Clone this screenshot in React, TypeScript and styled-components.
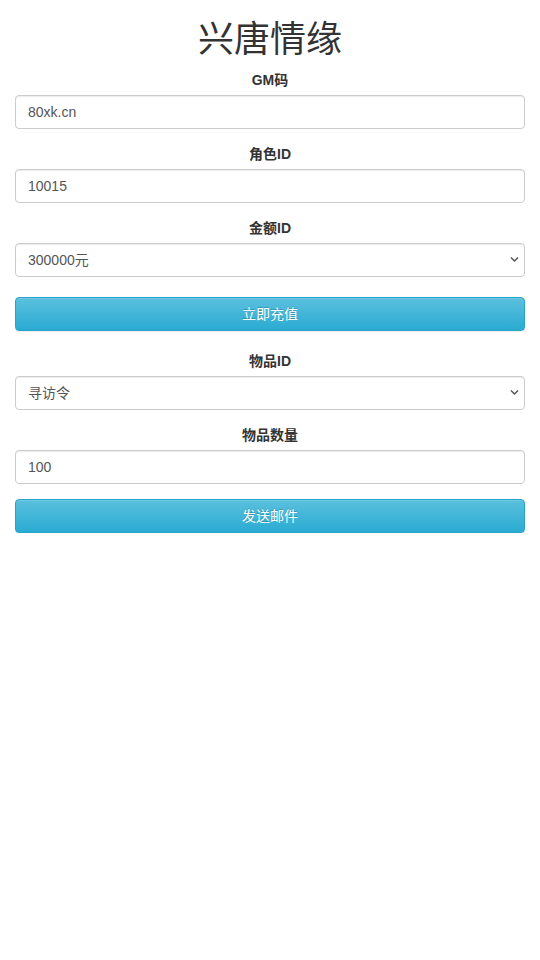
import styled, { createGlobalStyle } from 'styled-components';

const GlobalStyle = createGlobalStyle`
  * {
    box-sizing: border-box;
  }
  body {
    margin: 0;
    background: #fff;
    color: #333;
    font-family: "Liberation Sans", "Noto Sans CJK SC", Arial, sans-serif;
    font-size: 14px;
    line-height: 1.42857143;
  }
`;

const Container = styled.div`
  padding: 0 15px;
`;

const Title = styled.h1`
  margin: 20px 0 10px;
  text-align: center;
  font-size: 36px;
  font-weight: 400;
  line-height: 1.1;
  color: #333;
`;

const Form = styled.form`
  display: flex;
  flex-direction: column;
`;

const Group = styled.div<{ gap?: number }>`
  display: flex;
  flex-direction: column;
  margin-bottom: ${props => props.gap ?? 15}px;
`;

const Label = styled.label`
  display: block;
  margin-bottom: 5px;
  text-align: center;
  font-weight: 700;
  color: #333;
`;

const fieldCss = `
  display: block;
  width: 100%;
  height: 34px;
  padding: 6px 12px;
  font-family: "Liberation Sans", "Noto Sans CJK SC", Arial, sans-serif;
  font-size: 14px;
  line-height: 1.42857143;
  color: #555;
  background-color: #fff;
  border: 1px solid #ccc;
  border-radius: 4px;
  box-shadow: inset 0 1px 1px rgba(0, 0, 0, 0.075);
  outline: none;
`;

const Input = styled.input`
  ${fieldCss}
`;

const SelectWrap = styled.div`
  position: relative;
`;

const Select = styled.select`
  ${fieldCss}
  appearance: none;
  -webkit-appearance: none;
  padding-right: 28px;
`;

const Arrow = styled.svg`
  position: absolute;
  right: 6px;
  top: 13px;
  width: 9px;
  height: 7px;
  pointer-events: none;
`;

const Button = styled.button`
  display: block;
  width: 100%;
  height: 34px;
  padding: 6px 12px;
  font-family: "Liberation Sans", "Noto Sans CJK SC", Arial, sans-serif;
  font-size: 14px;
  line-height: 1.42857143;
  color: #fff;
  background-image: linear-gradient(to bottom, #5bc0de 0, #2aabd2 100%);
  border: 1px solid #28a4c9;
  border-radius: 4px;
  text-shadow: 0 -1px 0 rgba(0, 0, 0, 0.2);
  box-shadow: inset 0 1px 0 rgba(255, 255, 255, 0.15), 0 1px 1px rgba(0, 0, 0, 0.075);
  cursor: pointer;
`;

const Dropdown = ({ value, label }: { value: string; label: string }) => (
  <SelectWrap>
    <Select defaultValue={value}>
      <option value={value}>{label}</option>
    </Select>
    <Arrow viewBox="0 0 9 7">
      <path d="M1 1.5 L4.5 5 L8 1.5" fill="none" stroke="#555" strokeWidth="1.5" />
    </Arrow>
  </SelectWrap>
);

const App = () => {
  return (
    <>
      <GlobalStyle />
      <Container>
        <Title>兴唐情缘</Title>
        <Form onSubmit={e => e.preventDefault()}>
          <Group>
            <Label>GM码</Label>
            <Input defaultValue="80xk.cn" />
          </Group>
          <Group>
            <Label>角色ID</Label>
            <Input defaultValue="10015" />
          </Group>
          <Group gap={20}>
            <Label>金额ID</Label>
            <Dropdown value="300000" label="300000元" />
          </Group>
          <Group gap={20}>
            <Button type="button">立即充值</Button>
          </Group>
          <Group>
            <Label>物品ID</Label>
            <Dropdown value="xfl" label="寻访令" />
          </Group>
          <Group>
            <Label>物品数量</Label>
            <Input defaultValue="100" />
          </Group>
          <Button type="button">发送邮件</Button>
        </Form>
      </Container>
    </>
  );
};

export default App;
